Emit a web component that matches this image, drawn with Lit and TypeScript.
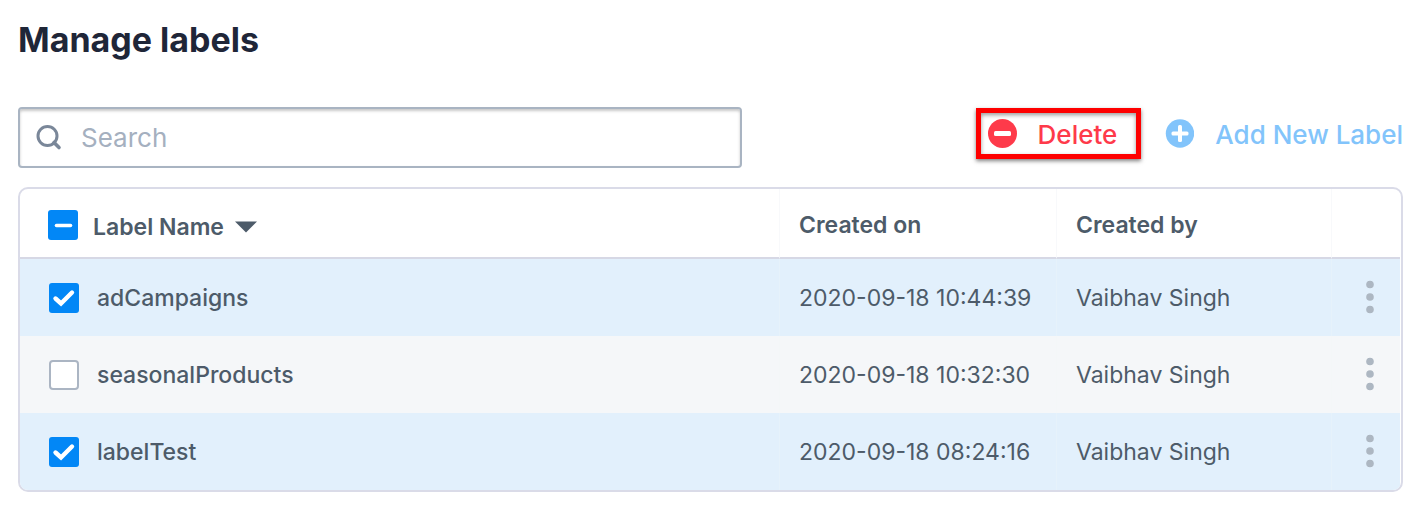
import { LitElement, html, css, svg, nothing } from "lit";
import { customElement, property, state } from "lit/decorators.js";
import { classMap } from "lit/directives/class-map.js";

interface LabelRow {
  id: number;
  name: string;
  createdOn: string;
  createdBy: string;
  selected: boolean;
}

const checkMark = svg`<path d="M6.5 15.5 L12 20.5 L23 9.5" />`;
const dashMark = svg`<path d="M8.5 15.5 H22.5" />`;

@customElement("check-box")
class CheckBox extends LitElement {
  @property({ type: Boolean }) checked = false;
  @property({ type: Boolean }) mixed = false;
  @property() label = "";

  static styles = css`
    :host {
      display: inline-grid;
      flex: none;
    }
    .box,
    .mark {
      grid-area: 1 / 1;
      width: 30px;
      height: 30px;
    }
    .box {
      appearance: none;
      box-sizing: border-box;
      margin: 0;
      border: 2px solid #abb5c3;
      border-radius: 4px;
      background: #fff;
      cursor: pointer;
    }
    .box:checked,
    .box:indeterminate {
      border: none;
      border-radius: 3px;
      background: #0287f6;
    }
    .mark {
      pointer-events: none;
      fill: none;
      stroke: #fff;
      stroke-width: 4.4;
      stroke-linecap: round;
    }
    .dash {
      stroke-width: 3.6;
    }
  `;

  private toggle() {
    this.dispatchEvent(new CustomEvent("toggle"));
  }

  render() {
    return html`
      <input
        class="box"
        type="checkbox"
        aria-label=${this.label}
        .checked=${this.checked}
        .indeterminate=${this.mixed}
        @change=${this.toggle}
      />
      ${this.mixed
        ? html`<svg class="mark dash" viewBox="0 0 30 30" aria-hidden="true">${dashMark}</svg>`
        : this.checked
          ? html`<svg class="mark" viewBox="0 0 30 30" aria-hidden="true">${checkMark}</svg>`
          : nothing}
    `;
  }
}

@customElement("app-root")
class AppRoot extends LitElement {
  @state() private rows: LabelRow[] = [
    { id: 1, name: "adCampaigns", createdOn: "2020-09-18 10:44:39", createdBy: "Vaibhav Singh", selected: true },
    { id: 2, name: "seasonalProducts", createdOn: "2020-09-18 10:32:30", createdBy: "Vaibhav Singh", selected: false },
    { id: 3, name: "labelTest", createdOn: "2020-09-18 08:24:16", createdBy: "Vaibhav Singh", selected: true },
  ];

  static styles = css`
    :host {
      display: block;
      box-sizing: border-box;
      padding: 16px 16px 20px 18px;
      font-family: Inter, "Liberation Sans", sans-serif;
      font-size: 23px;
      line-height: 28px;
      color: #4d5b69;
      background: #fff;
    }
    button {
      font: inherit;
      color: inherit;
      background: none;
      border: none;
      margin: 0;
      padding: 0;
      cursor: pointer;
    }
    .title {
      margin: 0 0 43px;
      font-size: 34px;
      line-height: 48px;
      font-weight: 700;
      color: #1f2638;
    }
    .toolbar {
      display: flex;
      align-items: flex-start;
      justify-content: space-between;
      gap: 24px;
      margin-bottom: 19px;
    }
    .search {
      box-sizing: border-box;
      display: flex;
      align-items: center;
      gap: 17px;
      flex: 0 1 724px;
      min-width: 0;
      height: 61px;
      padding: 0 16px;
      border: 2px solid #a9b4c2;
      border-radius: 4px;
      box-shadow: inset 0 2px 3px rgba(0, 0, 0, 0.22);
    }
    .search-icon {
      flex: none;
      width: 28px;
      height: 28px;
      fill: none;
      stroke: #7a8799;
      stroke-width: 3;
    }
    .search-input {
      flex: 1;
      min-width: 0;
      padding: 0;
      border: none;
      outline: none;
      background: none;
      font: inherit;
      font-size: 26px;
      line-height: 32px;
      color: #4d5b69;
    }
    .search-input::placeholder {
      color: #a5b0bf;
      opacity: 1;
    }
    .actions {
      display: flex;
      gap: 24px;
      padding-top: 1px;
      font-size: 26px;
      font-weight: 500;
      white-space: nowrap;
    }
    .action {
      display: flex;
      align-items: center;
      gap: 21px;
      height: 51px;
    }
    .action-text {
      padding-top: 2px;
    }
    .delete {
      box-sizing: border-box;
      padding: 0 19px 0 7px;
      border: 5px solid #fe0000;
      box-shadow: 0 2px 4px rgba(0, 0, 0, 0.5), inset 0 2px 4px rgba(0, 0, 0, 0.4);
      color: #fe3a4a;
    }
    .add {
      color: #82c4fb;
    }
    .action-icon {
      flex: none;
      width: 29px;
      height: 30px;
    }
    .frame {
      overflow: hidden;
      padding-right: 1px;
      border: 2px solid #dadbe8;
      border-radius: 10px;
    }
    .table {
      width: 100%;
      table-layout: fixed;
      border-collapse: separate;
      border-spacing: 0;
    }
    .date-col {
      width: 277px;
    }
    .author-col {
      width: 275px;
    }
    .menu-col {
      width: 69px;
    }
    th,
    td {
      box-sizing: border-box;
      padding: 0 0 0 19px;
      text-align: left;
      vertical-align: middle;
      font-weight: 400;
      border-left: 1px solid rgba(245, 247, 249, 0.25);
    }
    th {
      height: 70px;
      padding-top: 4px;
      border-bottom: 2px solid #d6d8e5;
      border-left-color: #f8f9fb;
      font-weight: 600;
    }
    th:first-child,
    td:first-child {
      border-left: none;
    }
    td {
      height: 77px;
      background: #f5f7f9;
    }
    .selected td {
      background: #e2f0fc;
    }
    .name-head {
      padding-left: 28px;
    }
    .name-cell {
      padding-left: 29px;
      font-weight: 500;
    }
    .name {
      display: flex;
      align-items: center;
      gap: 18px;
    }
    .name-head .name {
      gap: 15px;
    }
    .sort {
      display: flex;
      align-items: center;
      gap: 11px;
      padding-top: 3px;
      font-weight: 600;
    }
    .sort-icon {
      width: 22px;
      height: 12px;
      fill: #4d5b69;
    }
    .menu-cell {
      padding: 0 20px 0 0;
      text-align: right;
    }
    .menu {
      display: inline-flex;
      padding: 0 5px;
      vertical-align: middle;
    }
    .menu-icon {
      width: 10px;
      height: 36px;
      fill: #adb7c2;
    }
  `;

  private toggleAll() {
    const all = this.rows.every((r) => r.selected);
    this.rows = this.rows.map((r) => ({ ...r, selected: !all }));
  }

  private toggleRow(id: number) {
    this.rows = this.rows.map((r) => (r.id === id ? { ...r, selected: !r.selected } : r));
  }

  private renderRow(row: LabelRow) {
    return html`
      <tr class=${classMap({ selected: row.selected })}>
        <td class="name-cell">
          <div class="name">
            <check-box
              .checked=${row.selected}
              .label=${row.name}
              @toggle=${() => this.toggleRow(row.id)}
            ></check-box>
            <span>${row.name}</span>
          </div>
        </td>
        <td>${row.createdOn}</td>
        <td>${row.createdBy}</td>
        <td class="menu-cell">
          <button class="menu" type="button" aria-label="More options">
            <svg class="menu-icon" viewBox="0 0 10 36" aria-hidden="true">
              <circle cx="5" cy="4.5" r="3.8" />
              <circle cx="5" cy="17" r="3.8" />
              <circle cx="5" cy="29.5" r="3.8" />
            </svg>
          </button>
        </td>
      </tr>
    `;
  }

  render() {
    const count = this.rows.filter((r) => r.selected).length;
    const all = count === this.rows.length;
    return html`
      <h1 class="title">Manage labels</h1>
      <div class="toolbar">
        <label class="search">
          <svg class="search-icon" viewBox="0 0 28 28" aria-hidden="true">
            <circle cx="11.5" cy="12" r="9.5" />
            <path d="M18 18.5 L23 23.5" stroke-width="3.6" stroke-linecap="round" />
          </svg>
          <input class="search-input" type="text" placeholder="Search" aria-label="Search" />
        </label>
        <div class="actions">
          <button class="action delete" type="button">
            <svg class="action-icon" viewBox="0 0 29 30" aria-hidden="true">
              <circle cx="14.5" cy="14.5" r="14.5" fill="#fe3a4a" />
              <rect x="6" y="12" width="17" height="5" rx="1.5" fill="#fff" />
            </svg>
            <span class="action-text">Delete</span>
          </button>
          <button class="action add" type="button">
            <svg class="action-icon" viewBox="0 0 29 30" aria-hidden="true">
              <circle cx="15" cy="14.5" r="14.2" fill="#82c4fb" />
              <rect x="6.5" y="12.5" width="17" height="4" rx="1.5" fill="#fff" />
              <rect x="13" y="6" width="4" height="17" rx="1.5" fill="#fff" />
            </svg>
            <span class="action-text">Add New Label</span>
          </button>
        </div>
      </div>
      <div class="frame">
        <table class="table">
          <colgroup>
            <col />
            <col class="date-col" />
            <col class="author-col" />
            <col class="menu-col" />
          </colgroup>
          <thead>
            <tr>
              <th class="name-head" scope="col">
                <div class="name">
                  <check-box
                    .checked=${all}
                    .mixed=${count > 0 && !all}
                    .label=${"Select all labels"}
                    @toggle=${this.toggleAll}
                  ></check-box>
                  <button class="sort" type="button">
                    <span>Label Name</span>
                    <svg class="sort-icon" viewBox="0 0 22 12" aria-hidden="true">
                      <path d="M0 0.5 H22 L11 11.5 Z" />
                    </svg>
                  </button>
                </div>
              </th>
              <th scope="col">Created on</th>
              <th scope="col">Created by</th>
              <th scope="col" aria-label="Options"></th>
            </tr>
          </thead>
          <tbody>
            ${this.rows.map((row) => this.renderRow(row))}
          </tbody>
        </table>
      </div>
    `;
  }
}
